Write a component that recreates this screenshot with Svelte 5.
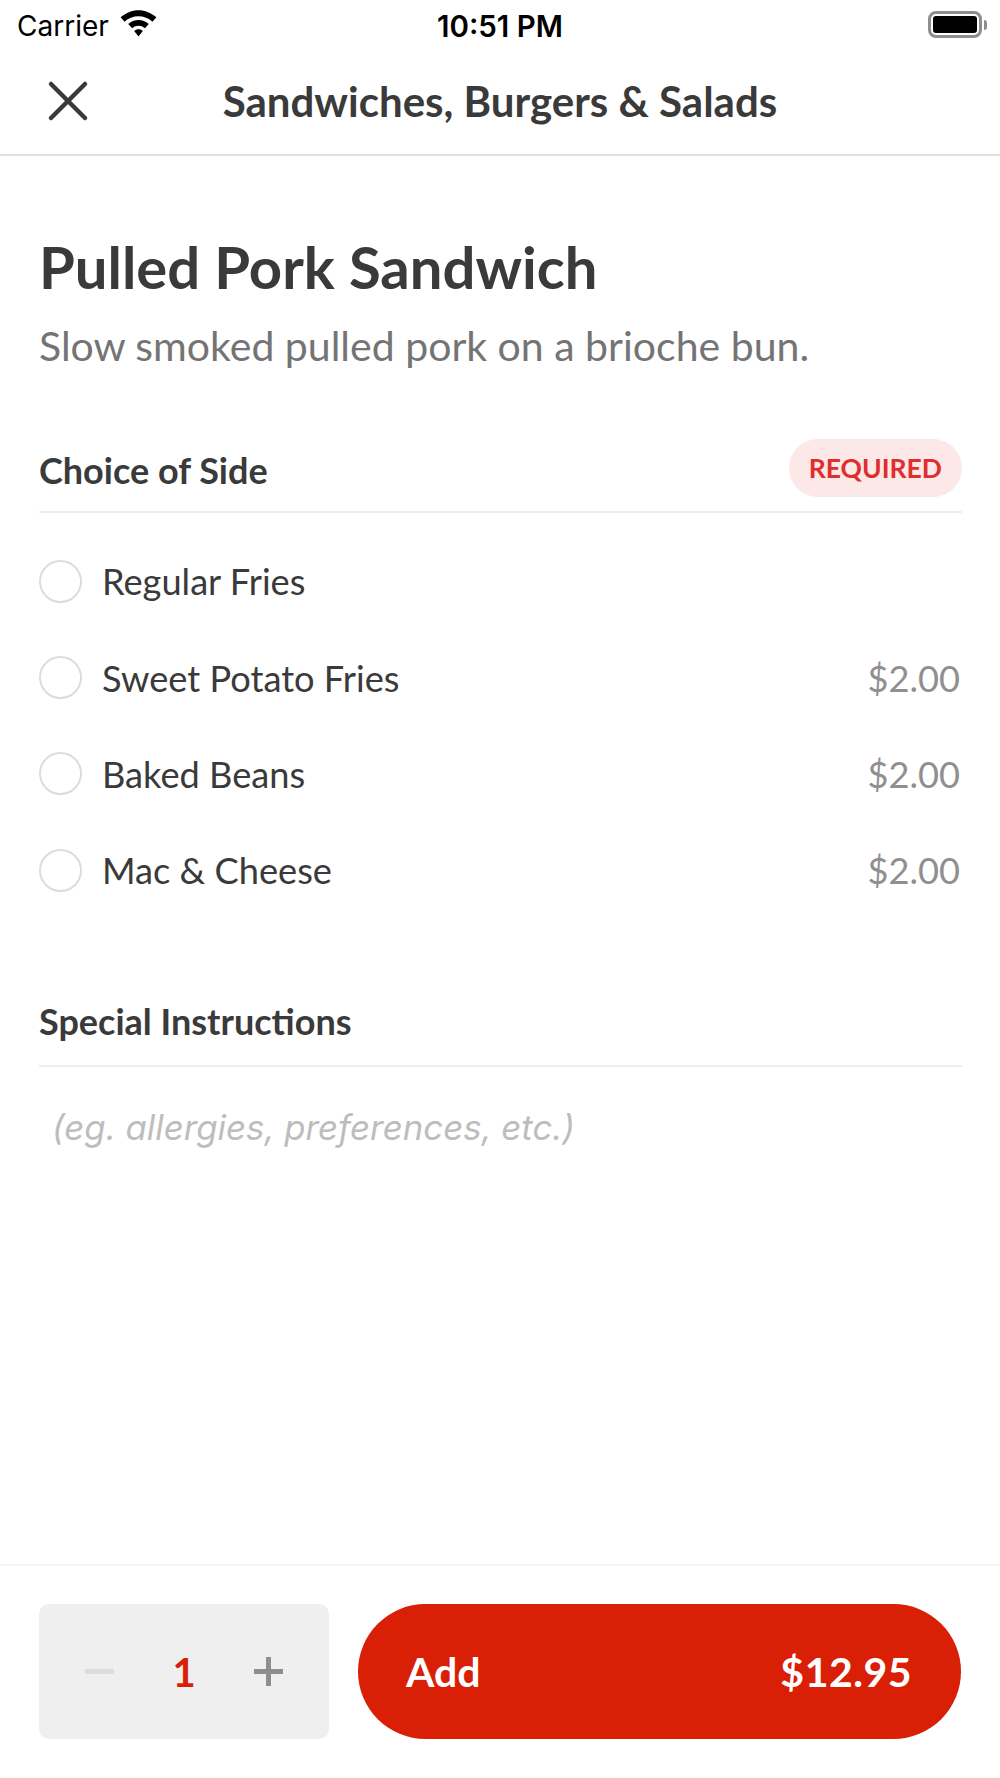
<script lang="ts">
    type Side = { name: string; price?: string }
    const sides: Side[] = [
        { name: "Regular Fries" },
        { name: "Sweet Potato Fries", price: "$2.00" },
        { name: "Baked Beans", price: "$2.00" },
        { name: "Mac & Cheese", price: "$2.00" },
    ]
</script>

<div class="screen">
    <div class="status">
        <div class="carrier">
            <span>Carrier</span>
            <svg class="wifi" width="37" height="27" viewBox="0 0 36 26">
                <path d="M18 0C11.5 0 5.6 2.6 0.6 7L4.4 11.2C8.2 8 12.9 6 18 6S27.8 8 31.6 11.2L35.4 7C30.4 2.6 24.5 0 18 0Z" />
                <path d="M18 9.6C14.4 9.6 10.8 11 8 13.4L11.8 17.6C13.6 16 15.7 15.2 18 15.2S22.4 16 24.2 17.6L28 13.4C25.2 11 21.6 9.6 18 9.6Z" />
                <path d="M18 18.6C16.4 18.6 15 19.2 13.8 20.2L18 25.6L22.2 20.2C21 19.2 19.6 18.6 18 18.6Z" />
            </svg>
        </div>
        <div class="time">10:51 PM</div>
        <div class="battery"><div class="cell"><div class="charge"></div></div><div class="nub"></div></div>
    </div>

    <header>
        <button class="close" aria-label="Close">
            <svg width="44" height="44" viewBox="0 0 44 44"><path d="M6 5L40 39M40 5L6 39" /></svg>
        </button>
        <div class="title">Sandwiches, Burgers &amp; Salads</div>
    </header>

    <main>
        <h1>Pulled Pork Sandwich</h1>
        <p class="desc">Slow smoked pulled pork on a brioche bun.</p>

        <div class="section first">
            <h2>Choice of Side</h2>
            <span class="badge">REQUIRED</span>
        </div>
        <div class="options">
            {#each sides as side}
                <div class="option">
                    <span class="radio"></span>
                    <span class="name">{side.name}</span>
                    {#if side.price}<span class="price">{side.price}</span>{/if}
                </div>
            {/each}
        </div>

        <div class="section">
            <h2>Special Instructions</h2>
        </div>
        <div class="placeholder">(eg. allergies, preferences, etc.)</div>
    </main>

    <footer>
        <div class="stepper">
            <span class="minus"></span>
            <span class="qty">1</span>
            <span class="plus"></span>
        </div>
        <button class="add">
            <span>Add</span>
            <span class="total">$12.95</span>
        </button>
    </footer>
</div>

<style>
    :global(body) {
        margin: 0;
        background: #fff;
    }
    .screen {
        width: 1000px;
        height: 1778px;
        display: flex;
        flex-direction: column;
        font-family: Lato, sans-serif;
        color: #3a3a3a;
        overflow: hidden;
    }

    .status {
        height: 50px;
        display: grid;
        grid-template-columns: 1fr auto 1fr;
        align-items: center;
        padding: 1px 17px 0;
        box-sizing: border-box;
        font-family: Inter, sans-serif;
        color: #000;
    }
    .carrier {
        display: flex;
        align-items: center;
        gap: 11px;
        font-size: 28px;
    }
    .wifi {
        fill: #000;
        margin-top: -4px;
    }
    .time {
        font-size: 29.5px;
        font-weight: 600;
    }
    .battery {
        justify-self: end;
        display: flex;
        align-items: center;
        margin: -2px -4px 0 0;
    }
    .cell {
        width: 54px;
        height: 27px;
        box-sizing: border-box;
        border: 3px solid #8e8e8e;
        border-radius: 8px;
        padding: 2px;
    }
    .charge {
        height: 100%;
        background: #000;
        border-radius: 3px;
    }
    .nub {
        width: 3px;
        height: 10px;
        background: #8e8e8e;
        border-radius: 0 3px 3px 0;
        margin-left: 2px;
    }

    header {
        height: 106px;
        box-sizing: border-box;
        border-bottom: 2px solid #dfdfdf;
        padding-bottom: 2px;
        display: grid;
        grid-template-columns: 136px 1fr 136px;
        align-items: center;
    }
    .close {
        background: none;
        border: none;
        padding: 0 0 0 45px;
        display: flex;
    }
    .close path {
        fill: none;
        stroke: #3a3a3a;
        stroke-width: 4.5;
        stroke-linecap: round;
    }
    .title {
        text-align: center;
        font-size: 42px;
        font-weight: 700;
        white-space: nowrap;
    }

    main {
        flex: 1;
        padding: 0 38px 0 39px;
    }
    h1 {
        margin: 77px 0 0;
        font-size: 58px;
        line-height: 68px;
        font-weight: 700;
    }
    .desc {
        margin: 22px 0 0;
        font-size: 41px;
        line-height: 46px;
        color: #747474;
    }
    .section {
        display: flex;
        align-items: center;
        justify-content: space-between;
        border-bottom: 2px solid #eee;
        height: 88px;
        margin-top: 58px;
    }
    .section.first {
        margin-top: 0;
        height: 84px;
        padding-top: 58px;
        box-sizing: content-box;
    }
    .section.first h2 {
        margin-top: 2px;
    }
    h2 {
        margin: 0;
        font-size: 36px;
        font-weight: 700;
    }
    .badge {
        background: #fde8e8;
        color: #e02d2d;
        font-size: 26.5px;
        font-weight: 700;
        line-height: 58px;
        padding: 0 20px;
        margin-top: -2px;
        border-radius: 29px;
    }
    .options {
        padding-top: 20px;
    }
    .option {
        height: 96.4px;
        display: flex;
        align-items: center;
        font-size: 36.2px;
    }
    .radio {
        width: 43px;
        height: 43px;
        box-sizing: border-box;
        border: 2px solid #dcdcdc;
        border-radius: 50%;
        margin-right: 20px;
    }
    .name {
        flex: 1;
    }
    .price {
        color: #8f8f8f;
        margin-right: 2px;
    }
    .placeholder {
        margin: 39px 0 0 13px;
        font-family: Inter, sans-serif;
        font-style: italic;
        font-size: 34.8px;
        color: #bdbdbd;
    }

    footer {
        height: 214px;
        box-sizing: border-box;
        border-top: 2px solid #f6f6f6;
        padding: 38px 39px 0 39px;
        display: flex;
        gap: 29px;
    }
    .stepper {
        width: 290px;
        height: 135px;
        box-sizing: border-box;
        background: #efefef;
        border-radius: 10px;
        display: flex;
        align-items: center;
        justify-content: space-between;
        padding: 0 46px;
    }
    .minus, .plus {
        position: relative;
        width: 29px;
        height: 5px;
        background: #dcdcdc;
    }
    .plus {
        background: #8e8e8e;
    }
    .plus::after {
        content: "";
        position: absolute;
        left: 12px;
        top: -12px;
        width: 5px;
        height: 29px;
        background: #8e8e8e;
    }
    .qty {
        color: #d91f05;
        font-size: 40px;
        font-weight: 700;
    }
    .add {
        flex: 1;
        height: 135px;
        background: #d91f05;
        color: #fff;
        border: none;
        border-radius: 68px;
        display: flex;
        align-items: center;
        justify-content: space-between;
        padding: 0 49px 0 48px;
        font-family: inherit;
        font-size: 41px;
        font-weight: 700;
    }
    .total {
        letter-spacing: 0.5px;
    }
</style>
